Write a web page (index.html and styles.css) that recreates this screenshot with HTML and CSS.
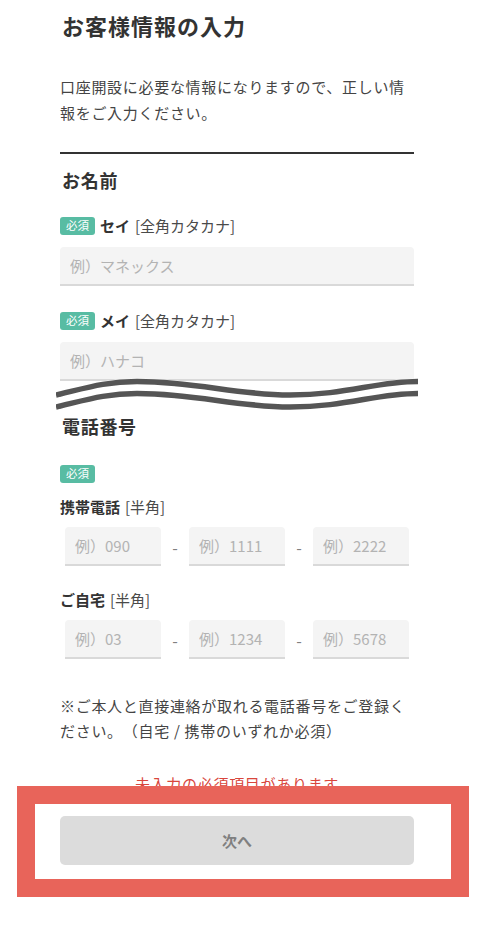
FILE: index.html
```html
<!DOCTYPE html>
<html lang="ja">
<head>
    <meta charset="UTF-8">
    <meta name="viewport" content="width=device-width, initial-scale=1.0">
    <title>お客様情報の入力</title>
    <link rel="stylesheet" href="styles.css">
</head>
<body>
    <div class="page">
        <h1 class="title">お客様情報の入力</h1>
        <p class="lead">口座開設に必要な情報になりますので、正しい情報をご入力ください。</p>

        <div class="divider"></div>

        <h2 class="section">お名前</h2>

        <div class="label label-first">
            <span class="badge">必須</span>
            <b>セイ</b><span class="sub">[全角カタカナ]</span>
        </div>
        <input class="field" type="text" placeholder="例）マネックス">

        <div class="label label-next">
            <span class="badge">必須</span>
            <b>メイ</b><span class="sub">[全角カタカナ]</span>
        </div>
        <input class="field" type="text" placeholder="例）ハナコ">

        <!-- 省略の波線 -->
        <svg class="cut" width="362" height="34" viewBox="0 0 362 34">
            <path d="M0 23 C 30 16, 50 9.5, 81 9.5 C 140 9.5, 180 23, 234 23 C 290 23, 320 9.5, 362 9.5" fill="none" stroke="#fff" stroke-width="18"/>
            <path d="M0 17 C 30 10, 50 3.5, 81 3.5 C 140 3.5, 180 17, 234 17 C 290 17, 320 3.5, 362 3.5" fill="none" stroke="#555" stroke-width="5.5"/>
            <path d="M0 29 C 30 22, 50 15.5, 81 15.5 C 140 15.5, 180 29, 234 29 C 290 29, 320 15.5, 362 15.5" fill="none" stroke="#555" stroke-width="5.5"/>
        </svg>

        <h2 class="section section-tel">電話番号</h2>

        <div class="badge-row"><span class="badge">必須</span></div>

        <div class="label label-tel"><b>携帯電話</b><span class="sub">[半角]</span></div>
        <div class="tel-row">
            <input class="field tel" type="text" placeholder="例）090">
            <span class="dash">-</span>
            <input class="field tel" type="text" placeholder="例）1111">
            <span class="dash">-</span>
            <input class="field tel" type="text" placeholder="例）2222">
        </div>

        <div class="label label-home"><b>ご自宅</b><span class="sub">[半角]</span></div>
        <div class="tel-row">
            <input class="field tel" type="text" placeholder="例）03">
            <span class="dash">-</span>
            <input class="field tel" type="text" placeholder="例）1234">
            <span class="dash">-</span>
            <input class="field tel" type="text" placeholder="例）5678">
        </div>

        <p class="note">※ご本人と直接連絡が取れる電話番号をご登録ください。（自宅 / 携帯のいずれか必須）</p>

        <p class="error">未入力の必須項目があります</p>

        <div class="btn-wrap">
            <button class="next" type="button" disabled>次へ</button>
            <div class="mark"></div>
        </div>
    </div>
</body>
</html>
```

FILE: styles.css
```css
body {
    margin: 0;
    background-color: #fff;
    color: #333;
    font-family: "Noto Sans CJK JP", "Noto Sans", sans-serif;
    text-spacing-trim: space-all;
}

.page {
    width: 354px;
    margin-left: 60px;
    padding-bottom: 40px;
}

.title {
    margin: 10px 0 0 2px;
    font-size: 22px;
    line-height: 30px;
    letter-spacing: 1px;
    font-weight: bold;
    color: #333;
}

.lead {
    margin: 34px 0 0;
    font-size: 15px;
    line-height: 26px;
    letter-spacing: 0.7px;
    color: #444;
}

.divider {
    margin-top: 26px;
    height: 2px;
    background-color: #333;
}

.section {
    margin: 13px 0 0 2px;
    font-size: 18px;
    line-height: 26px;
    letter-spacing: 0.7px;
    font-weight: bold;
    color: #333;
}

.section-tel {
    margin-top: 1px;
}

.label {
    display: flex;
    align-items: center;
    height: 20px;
    font-size: 15px;
    line-height: 20px;
    color: #333;
}

.label b {
    font-weight: bold;
}

.label .badge {
    margin-right: 5px;
}

.label .sub {
    margin-left: 5px;
    color: #4a4a4a;
}

.label-first {
    margin-top: 23px;
}

.label-next {
    margin-top: 25px;
}

.label-tel {
    margin-top: 14px;
}

.label-home {
    margin-top: 24px;
}

.badge {
    display: inline-flex;
    align-items: center;
    justify-content: center;
    width: 35px;
    height: 18px;
    border-radius: 3px;
    background-color: #58bca3;
    color: #fff;
    font-size: 11.5px;
    line-height: 1;
}

.badge-row {
    display: flex;
    margin-top: 26px;
}

.field {
    display: block;
    box-sizing: border-box;
    width: 100%;
    height: 39px;
    margin-top: 11px;
    padding: 0 10px;
    border: none;
    border-bottom: 2px solid #d9d9d9;
    border-radius: 4px 4px 0 0;
    background-color: #f4f4f4;
    font-family: inherit;
    font-size: 15px;
    color: #333;
    outline: none;
}

.field::placeholder {
    color: #b3b3b3;
}

.cut {
    display: block;
    margin: -3px 0 0 -4px;
}

.tel-row {
    display: flex;
    align-items: center;
    margin-top: 10px;
    padding: 0 5px;
}

.tel-row .field {
    width: 96px;
    margin-top: 0;
}

.dash {
    width: 28px;
    text-align: center;
    font-size: 16px;
    color: #808080;
}

.note {
    margin: 34px 0 0;
    font-size: 15px;
    line-height: 25px;
    letter-spacing: 0.7px;
    color: #444;
}

.error {
    margin: 30px 0 0;
    text-align: center;
    font-size: 15px;
    line-height: 22px;
    letter-spacing: 0.7px;
    color: #d9463c;
}

.btn-wrap {
    position: relative;
    margin-top: 21px;
}

.next {
    display: block;
    width: 100%;
    height: 49px;
    border: none;
    border-radius: 5px;
    background-color: #dcdcdc;
    color: #808080;
    font-family: inherit;
    font-size: 15px;
    font-weight: bold;
}

.mark {
    position: absolute;
    top: -30px;
    left: -43px;
    box-sizing: border-box;
    width: 452px;
    height: 111px;
    border: 18px solid #e8645a;
}
```
